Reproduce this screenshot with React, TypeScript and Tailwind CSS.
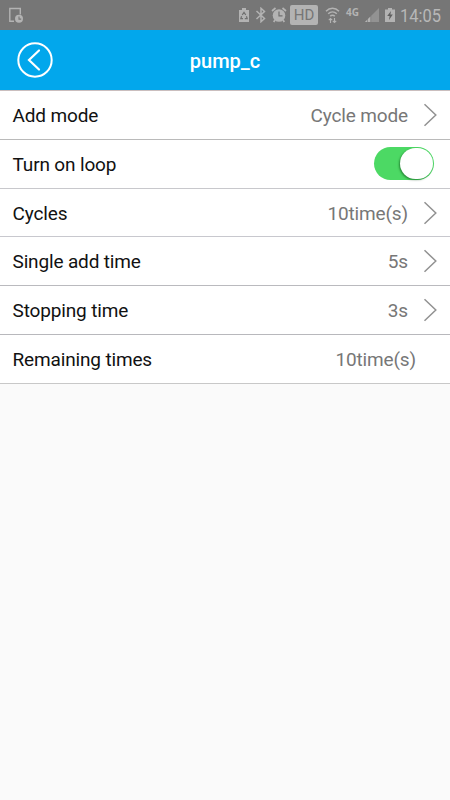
import React from "react";

type RowProps = {
  label: string;
  value?: string;
  chevron?: boolean;
  toggle?: boolean;
  line: string;
};

function Chevron() {
  return (
    <svg className="ml-[15px] mr-[12px] shrink-0" width="15" height="24" viewBox="0 0 15 24" fill="none" stroke="#929292" strokeWidth="1.5">
      <path d="M1.500 1.300 12.800 12 1.500 22.700" />
    </svg>
  );
}

function Toggle() {
  return (
    <div className="mb-px mr-4 flex h-[33px] w-[60px] items-center justify-end rounded-full bg-[#4cd964]">
      <div className="mr-px h-[31px] w-[33px] rounded-full bg-white shadow-[-1px_1px_2px_rgba(0,60,10,0.5)]" />
    </div>
  );
}

function Row({ label, value, chevron, toggle, line }: RowProps) {
  return (
    <div className={"flex items-center justify-between border-b bg-white pl-[12.500px] text-[19px] leading-6 tracking-[-0.15px] " + line}>
      <span className="pt-0.5 text-[#111]">{label}</span>
      <div className="flex items-center">
        {value && <span className={chevron ? "pt-0.5 text-[#777]" : "mr-[34px] pt-0.5 text-[#777]"}>{value}</span>}
        {chevron && <Chevron />}
        {toggle && <Toggle />}
      </div>
    </div>
  );
}

function StatusBar() {
  return (
    <div className="flex h-[30px] items-center bg-[#767676] text-[#b3b3b3]">
      <svg className="ml-2 shrink-0" width="17" height="18" viewBox="0 0 17 18" fill="none">
        <path d="M6 15.300H1.800V2.500h10.500v6" stroke="#b3b3b3" strokeWidth="1.400" />
        <circle cx="11" cy="12.800" r="4" fill="#b3b3b3" />
        <path d="M11 10.400v2.700h2.200" stroke="#767676" strokeWidth="1.100" />
      </svg>
      <svg className="ml-[213px] shrink-0" width="12" height="16" viewBox="0 0 12 16">
        <path d="M4 1h4v2h3v12H1V3h3z" fill="#b3b3b3" />
        <path d="M4.200 8 6 5.300 7.800 8M8.400 9.300l.8 2.400H6.800M5 11.700H2.800l.8-2.400" fill="none" stroke="#707070" strokeWidth="1.200" />
      </svg>
      <svg className="ml-[5px] shrink-0" width="12" height="16" viewBox="0 0 12 16" fill="none" stroke="#b3b3b3" strokeWidth="1.500">
        <path d="m1.500 4 8 7.500L6 14.700V1.300l3.500 3.200-8 7.500" />
      </svg>
      <svg className="ml-1 shrink-0" width="16" height="18" viewBox="0 0 16 18" fill="none">
        <path d="M1 5 4.500 2M15 5l-3.500-3" stroke="#b3b3b3" strokeWidth="1.700" />
        <path d="m4 14-1.300 2M12 14l1.300 2" stroke="#b3b3b3" strokeWidth="1.700" />
        <circle cx="8" cy="9.500" r="6.300" fill="#b3b3b3" />
        <path d="M8 5.500v4.300h3.500" stroke="#707070" strokeWidth="1.200" />
      </svg>
      <div className="ml-[3px] flex h-5 w-[28px] items-center justify-center rounded-[2px] bg-[#b3b3b3] text-[15px] leading-none text-[#767676]">HD</div>
      <svg className="ml-[7px] shrink-0" width="15" height="18" viewBox="0 0 15 18" fill="none" stroke="#b3b3b3" strokeWidth="1.500">
        <path d="M1 5.300c3.800-4 9.200-4 13 0M3.200 7.800c2.500-2.500 6.100-2.500 8.600 0M5.200 10.200c1.300-1.300 3.300-1.300 4.600 0" />
        <path d="M5.500 17v-4.500M3.800 14.200l1.700-1.700 1.700 1.700M9.500 12v4.500M7.800 14.800l1.700 1.700 1.700-1.700" strokeWidth="1.100" />
      </svg>
      <span className="mb-[6px] ml-[6px] w-[13px] font-['Open_Sans',sans-serif] text-[10px] font-bold leading-none">4G</span>
      <svg className="ml-[5px] shrink-0" width="16" height="16" viewBox="0 0 16 16">
        <path d="M15 1v14H1z" fill="#929292" />
        <path d="M6.500 9.500V15H1z" fill="#b3b3b3" />
        <path d="M3.500 12v3M6.800 9v6" stroke="#767676" strokeWidth=".6" />
      </svg>
      <svg className="ml-1 shrink-0" width="12" height="16" viewBox="0 0 12 16">
        <path d="M4 1h4v1.500h3V15H1V2.500h3z" fill="#b3b3b3" />
        <path d="M7 4 3.200 9h2.400L5 13l3.800-5.400H6.400z" fill="#606060" />
      </svg>
      <span className="ml-1 origin-left scale-x-[0.89] pt-0.5 text-[18.500px] leading-none text-[#b8b8b8]">14:05</span>
    </div>
  );
}

export default function App() {
  return (
    <div className="flex h-[800px] w-[450px] flex-col overflow-hidden bg-[#fafafa] font-[Roboto,sans-serif]">
      <StatusBar />
      <header className="grid h-[61px] grid-cols-3 items-center border-b border-[#cabebe] bg-[#02a7ec]">
        <svg className="ml-4" width="38" height="38" viewBox="0 0 38 38" fill="none" stroke="#fff" strokeWidth="2">
          <circle cx="19" cy="19" r="16.700" />
          <path d="M23 9.500 13 19l10 9.500" strokeWidth="2.200" strokeLinecap="round" />
        </svg>
        <h1 className="pt-0.5 text-center text-[20px] font-medium leading-6 text-white">pump_c</h1>
      </header>
      <main className="grid grid-rows-[49px_49px_48px_49px_49px_49px]">
        <Row label="Add mode" value="Cycle mode" chevron line="border-[#bababa]" />
        <Row label="Turn on loop" toggle line="border-[#c8c8cc]" />
        <Row label="Cycles" value="10time(s)" chevron line="border-[#c8c8ce]" />
        <Row label="Single add time" value="5s" chevron line="border-[#bababe]" />
        <Row label="Stopping time" value="3s" chevron line="border-[#b8b8bc]" />
        <Row label="Remaining times" value="10time(s)" line="border-[#c8c8c8]" />
      </main>
    </div>
  );
}
